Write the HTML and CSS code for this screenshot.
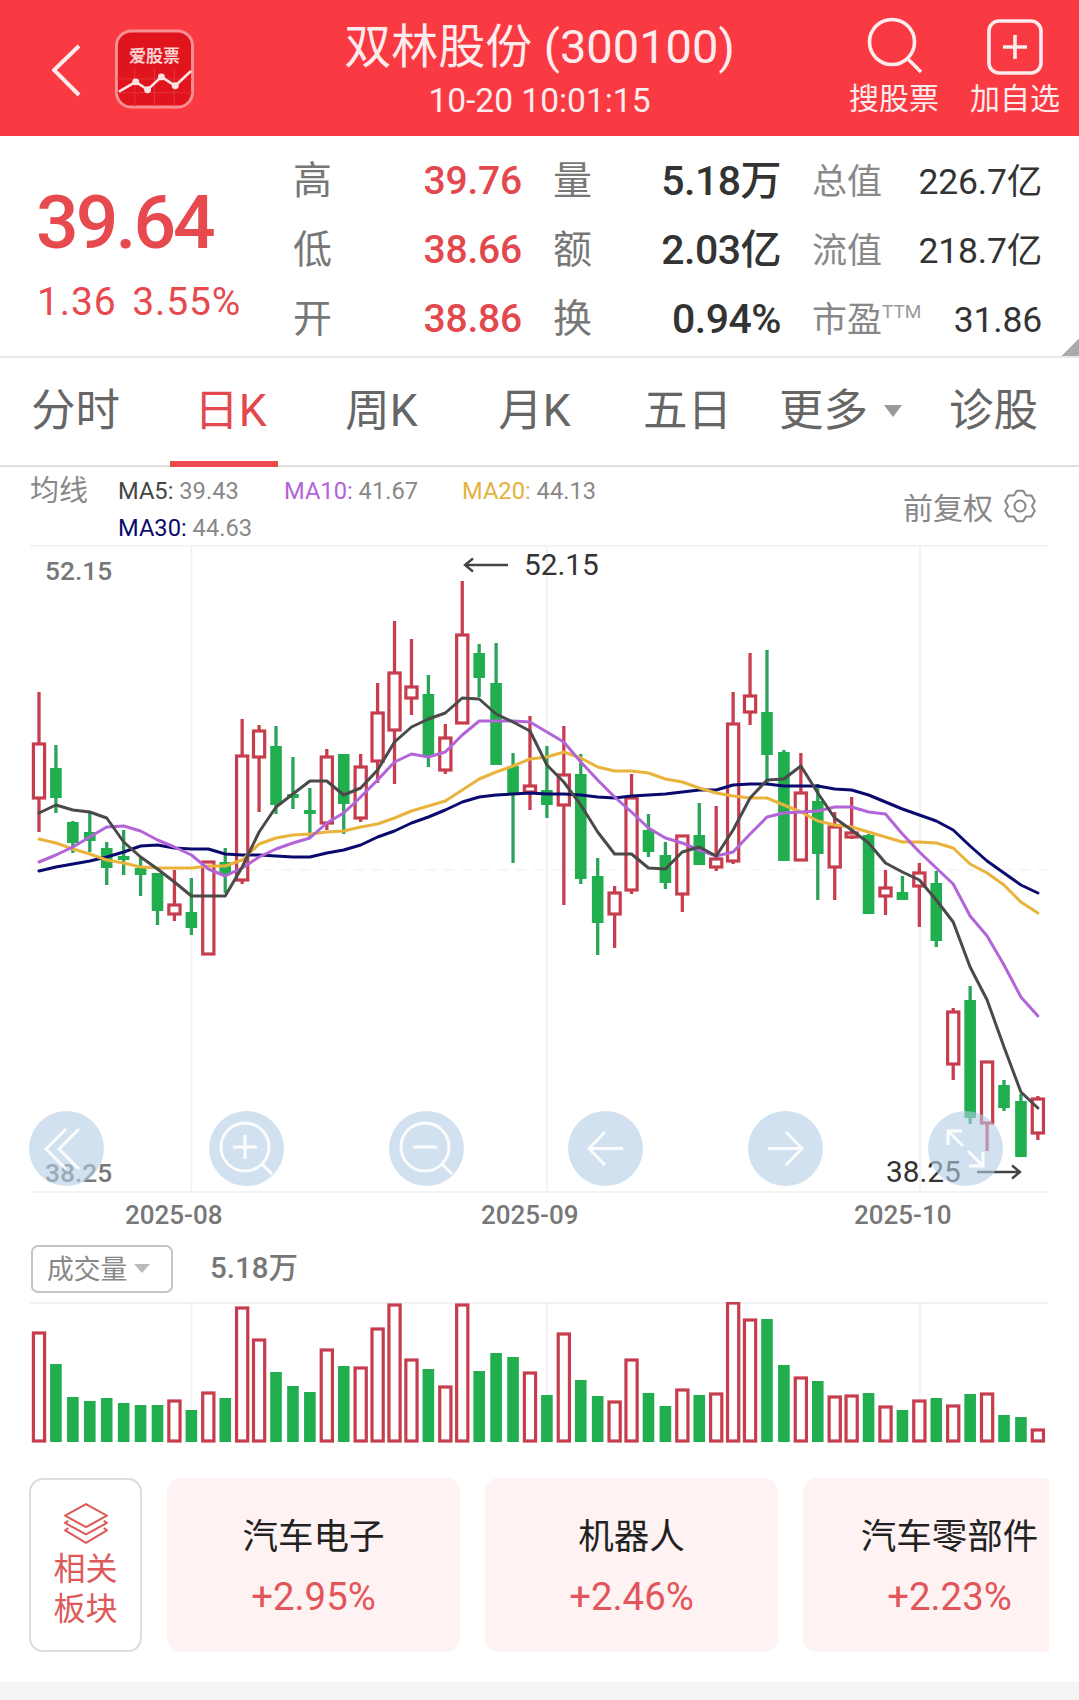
FILE: index.html
```html
<!DOCTYPE html>
<html lang="zh-CN">
<head>
<meta charset="utf-8">
<title>双林股份 (300100)</title>
<link rel="stylesheet" href="styles.css">
</head>
<body>
<div class="page">
  <header class="topbar">
    <div class="topbar-left">
      <svg class="back" viewBox="0 0 30 54"><polyline points="27,3 2,27 27,52"/></svg>
      <div class="logo">
        <svg class="logo-art" viewBox="0 0 80 80">
          <rect class="logo-bg" x="1.5" y="1.5" width="77" height="77" rx="15"/>
          <path class="logo-grid" d="M20 40V78M40 40V78M60 40V78M2 50H78M2 64H78"/>
          <polyline class="logo-line" points="4,63 21,53 33,61 47,48 61,57 77,42"/>
          <circle class="logo-dot" cx="21" cy="53" r="3.5"/>
          <circle class="logo-dot" cx="33" cy="61" r="3.5"/>
          <circle class="logo-dot" cx="47" cy="48" r="3.5"/>
          <circle class="logo-dot" cx="61" cy="57" r="3.5"/>
        </svg>
        <span class="logo-text">爱股票</span>
      </div>
    </div>
    <div class="topbar-title">
      <div class="stock-name">双林股份 (300100)</div>
      <div class="stock-time">10-20 10:01:15</div>
    </div>
    <div class="topbar-right">
      <div class="top-action">
        <svg class="top-icon" viewBox="0 0 60 64"><circle cx="28" cy="28" r="22.5"/><line x1="44" y1="45" x2="57" y2="58"/></svg>
        <span>搜股票</span>
      </div>
      <div class="top-action">
        <svg class="top-icon" viewBox="0 0 60 64"><rect x="4" y="7" width="52" height="52" rx="10"/><path d="M30 21V45M18 33H42"/></svg>
        <span>加自选</span>
      </div>
    </div>
  </header>

  <section class="quote">
    <div class="quote-main">
      <div class="price">39.64</div>
      <div class="change">1.36 3.55%</div>
    </div>
    <div class="quote-grid">
      <span class="q-name">高</span><span class="q-red">39.76</span>
      <span class="q-name q-pad">量</span><span class="q-dark">5.18万</span>
      <span class="q-name2">总值</span><span class="q-dark2">226.7亿</span>
      <span class="q-name">低</span><span class="q-red">38.66</span>
      <span class="q-name q-pad">额</span><span class="q-dark">2.03亿</span>
      <span class="q-name2">流值</span><span class="q-dark2">218.7亿</span>
      <span class="q-name">开</span><span class="q-red">38.86</span>
      <span class="q-name q-pad">换</span><span class="q-dark">0.94%</span>
      <span class="q-name2">市盈<sup class="ttm">TTM</sup></span><span class="q-dark2">31.86</span>
    </div>
    <i class="corner"></i>
  </section>

  <nav class="tabs">
    <div class="tab">分时</div>
    <div class="tab tab-active">日K</div>
    <div class="tab">周K</div>
    <div class="tab">月K</div>
    <div class="tab">五日</div>
    <div class="tab tab-more">更多<i class="tab-caret"></i></div>
    <div class="tab">诊股</div>
  </nav>

  <section class="legend">
    <div class="legend-title">均线</div>
    <div class="legend-list">
      <span><b class="ma5">MA5:</b> 39.43</span>
      <span><b class="ma10">MA10:</b> 41.67</span>
      <span><b class="ma20">MA20:</b> 44.13</span>
      <span><b class="ma30">MA30:</b> 44.63</span>
    </div>
    <div class="legend-adjust">
      <span>前复权</span>
      <svg class="gear" viewBox="0 0 34 34"><polygon points="13.8,1.8 20.2,1.8 23,6.6 28.5,6.6 31.7,12.2 29,17 31.7,21.8 28.5,27.4 23,27.4 20.2,32.2 13.8,32.2 11,27.4 5.5,27.4 2.3,21.8 5,17 2.3,12.2 5.5,6.6 11,6.6"/><circle cx="17" cy="17" r="5.5"/></svg>
    </div>
  </section>

  <section class="chart">
    <svg id="kline" class="chart-svg" viewBox="0 545 1079 648"></svg>
    <span class="axis-label axis-high">52.15</span>
    <span class="axis-label axis-low">38.25</span>
    <div class="mark mark-high">
      <svg class="mark-arrow" viewBox="0 0 46 16"><path d="M45 8H2M10 1.5L2 8L10 14.5"/></svg>
      <span>52.15</span>
    </div>
    <div class="mark mark-low">
      <span>38.25</span>
      <svg class="mark-arrow" viewBox="0 0 46 16"><path d="M1 8H44M36 1.5L44 8L36 14.5"/></svg>
    </div>
    <div class="tools">
      <div class="tool"><svg viewBox="0 0 75 75"><path d="M37 18L17 38L37 58M50 18L30 38L50 58"/></svg></div>
      <div class="tool"><svg viewBox="0 0 75 75"><circle cx="36" cy="36" r="24"/><path d="M36 24V48M24 36H48M53 53L63 63"/></svg></div>
      <div class="tool"><svg viewBox="0 0 75 75"><circle cx="36" cy="36" r="24"/><path d="M24 36H48M53 53L63 63"/></svg></div>
      <div class="tool"><svg viewBox="0 0 75 75"><path d="M55 37.5H21M37 21L21 37.5L37 54"/></svg></div>
      <div class="tool"><svg viewBox="0 0 75 75"><path d="M20 37.5H54M38 21L54 37.5L38 54"/></svg></div>
      <div class="tool"><svg viewBox="0 0 75 75"><path d="M20 34V20H34M20 20L35 35M55 41V55H41M55 55L40 40"/></svg></div>
    </div>
  </section>

  <div class="dates">
    <span>2025-08</span>
    <span>2025-09</span>
    <span>2025-10</span>
  </div>

  <div class="vol-head">
    <div class="vol-select">成交量<i class="vol-caret"></i></div>
    <div class="vol-value">5.18万</div>
  </div>

  <svg id="volume" class="vol-svg" viewBox="0 1302 1079 141"></svg>

  <section class="sectors">
    <div class="sector-side">
      <svg class="stack" viewBox="0 0 44 42"><path d="M22 2L42 13L22 24L2 13ZM5 18L2 20L22 31L42 20L39 18M5 25L2 27L22 39L42 27L39 25"/></svg>
      <div class="side-text">相关<br>板块</div>
    </div>
    <div class="sector-card"><div class="sector-name">汽车电子</div><div class="sector-pct">+2.95%</div></div>
    <div class="sector-card"><div class="sector-name">机器人</div><div class="sector-pct">+2.46%</div></div>
    <div class="sector-card"><div class="sector-name">汽车零部件</div><div class="sector-pct">+2.23%</div></div>
  </section>

  <div class="bottom-band"></div>
</div>
<script src="chart.js"></script>
</body>
</html>
```

FILE: styles.css
```css
* { box-sizing: border-box; }
html, body { margin: 0; padding: 0; background: #fff; }
.page {
  width: 1079px;
  font-family: Roboto, "Noto Sans CJK SC", sans-serif;
  color: #333;
  overflow: hidden;
}

/* top bar */
.topbar {
  height: 136px;
  background: #fa3a42;
  color: #fdeced;
  display: grid;
  grid-template-columns: 1fr auto 1fr;
}
.topbar-left { display: flex; align-items: flex-start; padding: 29px 0 0 52px; }
.back { width: 30px; height: 54px; margin: 14px 33px 0 0; fill: none; stroke: #fdeced; stroke-width: 4; }
.logo { position: relative; width: 79px; height: 80px; }
.logo-art { display: block; width: 79px; height: 80px; }
.logo-bg { fill: #e0141c; stroke: #f78f93; stroke-width: 3; }
.logo-grid { fill: none; stroke: #e5343a; stroke-width: 1; }
.logo-line { fill: none; stroke: #fbe4e4; stroke-width: 2.6; }
.logo-dot { fill: #fbe4e4; }
.logo-text {
  position: absolute; left: 0; right: 0; top: 16px;
  text-align: center; font-size: 17px; line-height: 22px; font-weight: 700; color: #fbd0d0;
}
.topbar-title { padding-top: 19px; text-align: center; }
.stock-name { font-size: 47px; line-height: 56px; white-space: nowrap; }
.stock-time { font-size: 33.5px; line-height: 44px; margin-top: 4px; }
.topbar-right { display: flex; justify-content: flex-end; gap: 31px; padding: 14px 19px 0 0; }
.top-action { width: 90px; display: flex; flex-direction: column; align-items: center; }
.top-action span { font-size: 30px; line-height: 34px; margin-top: 4px; white-space: nowrap; }
.top-icon { display: block; width: 60px; height: 64px; fill: none; stroke: #fdeced; stroke-width: 3.6; }

/* quote */
.quote {
  position: relative;
  height: 222px;
  display: flex;
  border-bottom: 2px solid #e8e8e8;
}
.quote-main { width: 293px; padding: 50px 0 0 36px; color: #e64a4f; }
.price { font-size: 75px; line-height: 70px; font-weight: 500; letter-spacing: -2.9px; padding-top: 1px; }
.change { font-size: 39px; line-height: 50px; margin: 20px 0 0 1px; letter-spacing: .9px; word-spacing: 5px; white-space: nowrap; }
.quote-grid {
  display: grid;
  grid-template-columns: 39px 190px 71px 188px 103px 158px;
  grid-auto-rows: 69px;
  padding-top: 10px;
  align-items: center;
  white-space: nowrap;
}
.q-name { font-size: 39px; line-height: 50px; color: #777; }
.q-pad { padding-left: 31px; }
.q-name2 { font-size: 35px; line-height: 46px; padding-top: 4px; color: #888; padding-left: 31px; }
.q-red { font-size: 39px; font-weight: 500; color: #e2484e; text-align: right; letter-spacing: -.2px; }
.q-dark { font-size: 41px; line-height: 50px; font-weight: 500; color: #333; text-align: right; letter-spacing: -.5px; }
.q-dark2 { font-size: 35.5px; line-height: 46px; padding-top: 3px; color: #333; text-align: right; letter-spacing: -.2px; }
.ttm { font-size: 19px; line-height: 0; color: #999; vertical-align: 14px; }
.corner {
  position: absolute; right: 0; bottom: 0; width: 17px; height: 18px;
  background: linear-gradient(to bottom right, transparent 50%, #aaa 50%);
}

/* tabs */
.tabs { height: 109px; display: flex; border-bottom: 2px solid #dedede; margin-left: -1px; }
.tab {
  position: relative; flex: none; width: 153px;
  display: flex; align-items: center; justify-content: center;
  padding-bottom: 10px;
  font-size: 44.5px; color: #666; white-space: nowrap;
}
.tab-active { color: #e2484e; padding-left: 4px; }
.tab-active::after {
  content: ""; position: absolute; left: 18px; bottom: -2px; width: 108px; height: 6px; background: #ee4b50;
}
.tab-more { padding-right: 34px; }
.tab-caret {
  position: absolute; left: 120px; top: 47px;
  border: solid transparent; border-width: 12px 9.5px 0; border-top-color: #999;
}

/* legend */
.legend { height: 78px; display: flex; padding: 6px 42px 0 30px; }
.legend-title { width: 88px; font-size: 29px; line-height: 37px; color: #888; }
.legend-list {
  display: grid; grid-template-columns: 166px 178px 160px; grid-auto-rows: 37px;
  font-size: 23.7px; line-height: 37px; color: #888; white-space: nowrap;
}
.legend-list b { font-weight: 400; }
.ma5 { color: #444; }
.ma10 { color: #b264d8; }
.ma20 { color: #e5b23e; }
.ma30 { color: #0b0b6b; }
.legend-adjust {
  margin-left: auto; display: flex; align-items: center; gap: 10px; height: 66px;
  font-size: 30px; color: #888;
}
.gear { width: 34px; height: 34px; fill: none; stroke: #888; stroke-width: 2; stroke-linejoin: round; }

/* chart */
.chart { position: relative; height: 648px; }
.chart-svg { display: block; width: 1079px; height: 648px; }
.grid-line { stroke: #efefef; stroke-width: 1.5; }
.grid-dash { stroke: #f3f3f3; stroke-width: 1.5; stroke-dasharray: 10 8; }
.wick-r { stroke: #c83d4f; stroke-width: 3.3; }
.wick-g { stroke: #2ba35a; stroke-width: 3.3; }
.body-r { fill: #fff; stroke: #c63d4e; stroke-width: 3.2; }
.body-g { fill: #20ae4f; }
.ma { fill: none; stroke-width: 3; stroke-linejoin: round; stroke-linecap: round; }
.line5 { stroke: #4a4a4a; }
.line10 { stroke: #b264d8; }
.line20 { stroke: #e9b33c; }
.line30 { stroke: #0a0a6e; }
.axis-label { position: absolute; left: 45px; font-size: 26.3px; line-height: 30px; color: #777; font-weight: 500; }
.axis-high { top: 11px; }
.axis-low { top: 613px; }
.mark { position: absolute; display: flex; align-items: center; gap: 15px; font-size: 29.8px; line-height: 34px; color: #333; }
.mark-high { left: 463px; top: 3px; }
.mark-low { left: 886px; top: 610px; }
.mark-arrow { width: 46px; height: 16px; fill: none; stroke: #444; stroke-width: 2.4; }
.tools {
  position: absolute; left: 29px; top: 566px; width: 974px;
  display: flex; justify-content: space-between;
}
.tool { width: 75px; height: 75px; border-radius: 50%; background: rgba(180, 205, 228, .6); }
.tool svg { display: block; width: 75px; height: 75px; fill: none; stroke: #fff; stroke-width: 3; opacity: .9; }

/* dates */
.dates {
  height: 47px; padding: 0 0 4px 125px;
  display: grid; grid-template-columns: 356px 373px auto; align-items: center;
  font-size: 26px; font-weight: 500; color: #777;
}

/* volume */
.vol-head { height: 62px; display: flex; padding: 5px 0 0 31px; }
.vol-select {
  width: 142px; height: 48px; border: 2px solid #c4c4c4; border-radius: 7px;
  display: flex; align-items: center; padding: 0 0 4px 14px;
  font-size: 26.8px; color: #888;
}
.vol-caret {
  margin: 3px 0 0 7px; border: solid transparent; border-width: 9px 8px 0; border-top-color: #bbb;
}
.vol-value { margin-left: 37px; height: 48px; line-height: 46px; font-size: 29.5px; font-weight: 500; color: #777; }
.vol-svg { display: block; width: 1079px; height: 141px; }

/* sectors */
.sectors {
  margin: 35px 30px 0 29px; height: 174px;
  display: flex; gap: 25px; overflow: hidden;
}
.sector-side {
  flex: none; width: 113px; border: 2px solid #dcdcdc; border-radius: 14px;
  display: flex; flex-direction: column; align-items: center;
  padding-top: 22px; color: #dd5a5a;
}
.stack { width: 46px; height: 44px; fill: none; stroke: #dd5a5a; stroke-width: 2; stroke-linejoin: round; }
.side-text { font-size: 32px; line-height: 40px; margin-top: 3px; text-align: center; }
.sector-card {
  flex: none; width: 293px; background: #fef2f2; border-radius: 14px;
  display: flex; flex-direction: column; align-items: center; padding-top: 34px;
}
.sector-name { font-size: 35.5px; line-height: 50px; color: #222; white-space: nowrap; }
.sector-pct { font-size: 38.3px; line-height: 50px; margin-top: 10px; color: #e2555a; }

.bottom-band { height: 18px; margin-top: 30px; background: #f5f5f5; }
```

FILE: chart.js
```js
// K-line and volume chart, drawn from the daily data in screen coordinates.
var NS = 'http://www.w3.org/2000/svg';
var STEP = 16.93, START = 39;

// [up?, high, body top, body bottom, low]
var candles = [
  [1,692,744,798,832],[0,745,769,797,813],[0,821,823,842,853],[0,812,833,840,852],[0,842,849,867,885],
  [0,830,857,859,875],[0,858,869,874,896],[0,874,874,910,925],[1,870,905,914,921],[0,878,913,927,935],
  [1,862,862,954,954],[0,848,863,873,893],[1,719,756,880,884],[1,725,731,757,812],[0,726,747,804,814],
  [0,757,795,797,809],[0,788,811,813,838],[1,749,757,823,830],[0,754,755,803,834],[1,754,767,818,822],
  [1,683,713,761,783],[1,621,673,730,784],[1,639,687,698,715],[0,675,695,756,767],[1,724,738,770,774],
  [1,581,635,723,723],[0,644,654,677,697],[0,643,684,764,764],[0,753,767,793,863],[1,716,786,792,810],
  [0,746,791,804,818],[1,726,775,805,905],[0,754,775,878,884],[0,858,877,922,955],[1,886,893,914,948],
  [1,774,798,890,894],[0,814,831,851,857],[0,842,856,882,889],[1,835,836,894,912],[0,803,836,864,864],
  [1,806,859,867,871],[1,692,724,861,864],[1,653,696,712,725],[0,650,713,754,784],[0,750,753,860,860],
  [1,753,793,860,860],[0,784,802,853,900],[1,812,827,867,900],[1,797,833,837,839],[0,834,836,913,913],
  [1,870,888,896,915],[0,876,893,899,900],[1,863,873,886,927],[0,871,884,940,947],[1,1008,1012,1064,1080],
  [0,986,1001,1117,1124],[1,1061,1062,1123,1151],[0,1080,1086,1107,1111],[0,1094,1102,1156,1157],[1,1096,1099,1133,1140]
];

var averages = {
  line5: [813,805,810,812,818,842,857,869,882,896,896,896,867,832,807,794,781,781,795,788,770,742,727,719,713,698,699,714,722,731,765,782,805,832,854,854,868,869,852,847,856,830,798,780,779,766,793,818,830,843,863,872,880,900,922,967,1000,1047,1092,1108],
  line10: [862,855,847,837,827,826,831,840,847,855,869,876,868,857,849,843,838,823,813,797,780,762,754,757,752,735,721,721,721,722,732,742,762,780,797,812,828,838,843,850,856,852,834,817,813,812,811,807,807,812,814,834,852,868,884,916,936,965,997,1016],
  line20: [839,843,849,854,860,863,867,868,868,868,866,866,860,844,838,835,834,832,831,827,824,818,811,806,801,790,779,772,766,759,757,752,758,767,771,771,773,779,782,788,793,796,798,798,805,812,821,825,827,832,837,842,842,843,848,864,873,885,902,913],
  line30: [871,867,864,861,857,852,846,845,848,849,849,854,855,855,856,857,857,853,850,845,837,831,823,817,810,802,797,795,794,793,794,794,795,797,798,796,795,794,792,790,790,785,784,784,786,786,786,789,790,795,802,809,815,821,830,846,861,873,885,893]
};

// [up?, top of bar]
var volumes = [
  [1,1333],[0,1364],[0,1397],[0,1401],[0,1398],[0,1403],[0,1405],[0,1405],[1,1401],[0,1410],
  [1,1393],[0,1398],[1,1308],[1,1340],[0,1372],[0,1386],[0,1392],[1,1350],[0,1366],[1,1368],
  [1,1329],[1,1305],[1,1360],[0,1369],[1,1387],[1,1305],[0,1371],[0,1353],[0,1357],[1,1373],
  [0,1395],[1,1334],[0,1380],[0,1396],[1,1402],[1,1360],[0,1393],[0,1406],[1,1390],[0,1395],
  [1,1394],[1,1303],[1,1320],[0,1319],[0,1365],[1,1378],[0,1381],[1,1397],[1,1396],[0,1393],
  [1,1407],[0,1410],[1,1401],[0,1398],[1,1406],[0,1394],[1,1394],[0,1415],[0,1417],[1,1430]
];

var VOL_BASE = 1441;

function add(parent, tag, attrs, cls) {
  var el = document.createElementNS(NS, tag);
  for (var k in attrs) el.setAttribute(k, attrs[k]);
  if (cls) el.setAttribute('class', cls);
  parent.appendChild(el);
  return el;
}
function hline(svg, y, x2) { add(svg, 'line', { x1: 30, x2: x2, y1: y, y2: y }, 'grid-line'); }
function vlines(svg, y1, y2) {
  [191.5, 547, 920].forEach(function (x) { add(svg, 'line', { x1: x, x2: x, y1: y1, y2: y2 }, 'grid-line'); });
}

var k = document.getElementById('kline');
hline(k, 546, 1049);
hline(k, 1192, 1049);
vlines(k, 546, 1192);
add(k, 'line', { x1: 30, x2: 1049, y1: 870, y2: 870 }, 'grid-dash');

candles.forEach(function (c, i) {
  var x = START + i * STEP, s = c[0] ? 'r' : 'g';
  if (c[2] > c[1]) add(k, 'line', { x1: x, x2: x, y1: c[1], y2: c[2] }, 'wick-' + s);
  if (c[4] > c[3]) add(k, 'line', { x1: x, x2: x, y1: c[3], y2: c[4] }, 'wick-' + s);
  if (c[0]) add(k, 'rect', { x: x - 5.6, y: c[2], width: 11.2, height: c[3] - c[2] }, 'body-r');
  else add(k, 'rect', { x: x - 5.8, y: c[2] - 1, width: 11.6, height: Math.max(c[3] - c[2] + 2, 3) }, 'body-g');
});

['line30', 'line20', 'line10', 'line5'].forEach(function (name) {
  var pts = averages[name].map(function (y, i) { return (START + i * STEP).toFixed(1) + ',' + y; }).join(' ');
  add(k, 'polyline', { points: pts }, 'ma ' + name);
});

var v = document.getElementById('volume');
hline(v, 1303, 1049);
vlines(v, 1303, 1442);
volumes.forEach(function (b, i) {
  var x = START + i * STEP;
  if (b[0]) add(v, 'rect', { x: x - 5.6, y: b[1], width: 11.2, height: VOL_BASE - b[1] }, 'body-r');
  else add(v, 'rect', { x: x - 5.8, y: b[1], width: 11.6, height: VOL_BASE + 1 - b[1] }, 'body-g');
});
```
